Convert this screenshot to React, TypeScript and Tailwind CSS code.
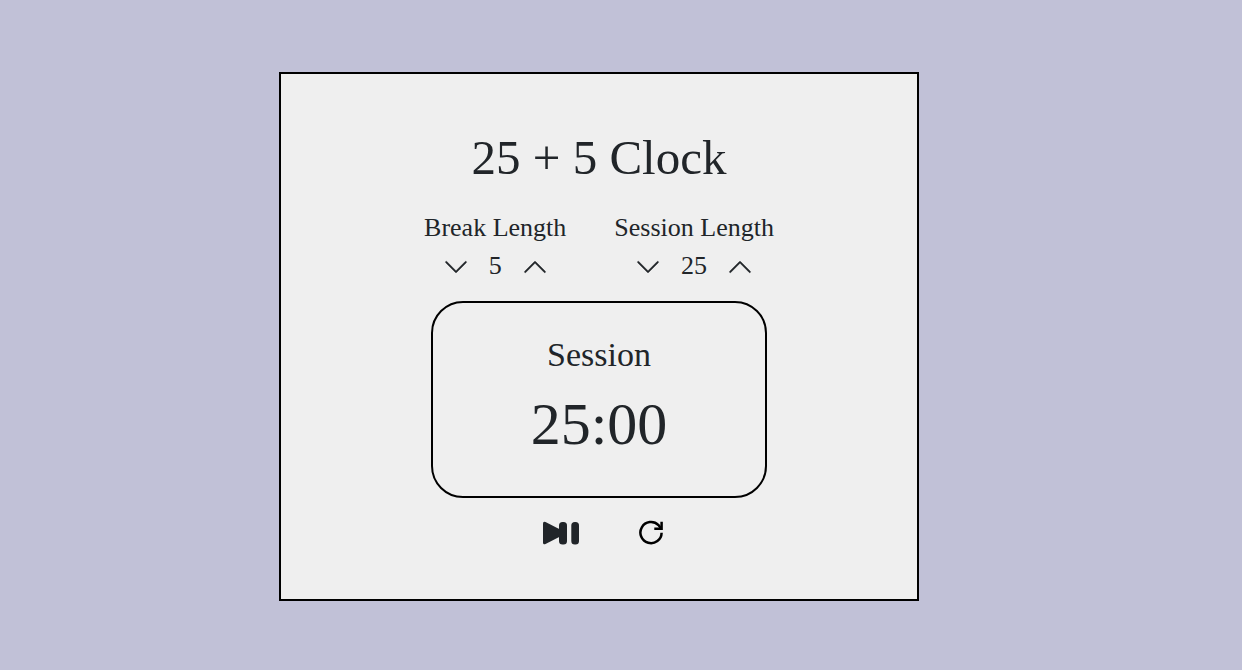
import { useEffect, useState } from "react";

function Chevron({ d }: { d: string }) {
  return (
    <svg viewBox="0 0 16 16" className="size-[26px]" fill="currentColor" stroke="currentColor" strokeWidth="0.2" aria-hidden="true">
      <path fillRule="evenodd" d={d} />
    </svg>
  );
}

const DOWN =
  "M1.646 4.646a.5.5 0 0 1 .708 0L8 10.293l5.646-5.647a.5.5 0 0 1 .708.708l-6 6a.5.5 0 0 1-.708 0l-6-6a.5.5 0 0 1 0-.708z";
const UP =
  "M7.646 4.646a.5.5 0 0 1 .708 0l6 6a.5.5 0 0 1-.708.708L8 5.707l-5.646 5.647a.5.5 0 0 1-.708-.708l6-6z";

type LengthProps = { label: string; value: number; onChange: (value: number) => void };

function LengthControl({ label, value, onChange }: LengthProps) {
  return (
    <div className="flex flex-col items-center" role="group" aria-label={label}>
      <h2 className="text-[26px] leading-[38px]">{label}</h2>
      <div className="flex h-[38px] items-center gap-5">
        <button type="button" className="pt-0.5" aria-label={`Decrease ${label}`} onClick={() => onChange(Math.max(1, value - 1))}>
          <Chevron d={DOWN} />
        </button>
        <span className="text-[26px] leading-[38px]">{value}</span>
        <button type="button" className="pt-0.5" aria-label={`Increase ${label}`} onClick={() => onChange(Math.min(60, value + 1))}>
          <Chevron d={UP} />
        </button>
      </div>
    </div>
  );
}

export default function App() {
  const [breakLength, setBreakLength] = useState(5);
  const [sessionLength, setSessionLength] = useState(25);
  const [seconds, setSeconds] = useState(1500);
  const [running, setRunning] = useState(false);
  const [mode, setMode] = useState("Session");

  useEffect(() => {
    if (!running) return;
    const id = setInterval(() => setSeconds((s) => s - 1), 1000);
    return () => clearInterval(id);
  }, [running]);

  useEffect(() => {
    if (seconds >= 0) return;
    const next = mode === "Session" ? "Break" : "Session";
    setMode(next);
    setSeconds((next === "Session" ? sessionLength : breakLength) * 60);
  }, [seconds, mode, sessionLength, breakLength]);

  const changeLength = (target: string, value: number) => {
    if (running) return;
    if (target === "Session") setSessionLength(value);
    else setBreakLength(value);
    if (target === mode) setSeconds(value * 60);
  };

  const reset = () => {
    setRunning(false);
    setMode("Session");
    setBreakLength(5);
    setSessionLength(25);
    setSeconds(1500);
  };

  const shown = Math.max(0, seconds);
  const time = [Math.floor(shown / 60), shown % 60].map((n) => String(n).padStart(2, "0")).join(":");

  return (
    <div className="min-h-screen bg-[#c1c1d7] px-4 pt-[72px] pb-16 font-['Liberation_Serif',serif] text-[#212529] lg:pr-[60px]">
      <main className="mx-auto flex w-full max-w-[640px] flex-col items-center border-2 border-black bg-[#efefef] pt-14 pb-[53px]">
        <h1 className="text-[49px] leading-[56px]">25 + 5 Clock</h1>
        <div className="mt-[23px] flex gap-12">
          <LengthControl label="Break Length" value={breakLength} onChange={(v) => changeLength("Break", v)} />
          <LengthControl label="Session Length" value={sessionLength} onChange={(v) => changeLength("Session", v)} />
        </div>
        <section className="mt-4 flex w-full max-w-[336px] flex-col items-center rounded-[32px] border-2 border-black pt-8 pb-[35px]">
          <h2 className="text-[34px] leading-[40px]">{mode}</h2>
          <div className="mt-3 text-[60px] leading-[74px]">{time}</div>
        </section>
        <div className="mt-[22px] flex items-center gap-[60px] pl-2">
          <button type="button" aria-label="Start or pause" onClick={() => setRunning(!running)}>
            <svg viewBox="0 0 36 26" className="h-[26px] w-9" fill="currentColor" aria-hidden="true">
              <path d="M0 3.6Q0 .9 2.500 2L24 13 2.500 24Q0 25.200 0 22.400Z" />
              <rect x="16" y="2" width="8" height="22.500" rx="3.500" />
              <rect x="28.300" y="2" width="7.700" height="22.500" rx="3.500" />
            </svg>
          </button>
          <button type="button" aria-label="Reset" onClick={reset} className="text-black">
            <svg viewBox="0 0 24 26" className="h-[26px] w-6" fill="none" stroke="currentColor" strokeWidth="2.500" aria-hidden="true">
              <path d="M22.600 12.700A10.600 10.600 0 1 1 19.500 5.100L22 8.500" />
              <path d="M22.600 1.800V8.700H15.300" />
            </svg>
          </button>
        </div>
      </main>
    </div>
  );
}
